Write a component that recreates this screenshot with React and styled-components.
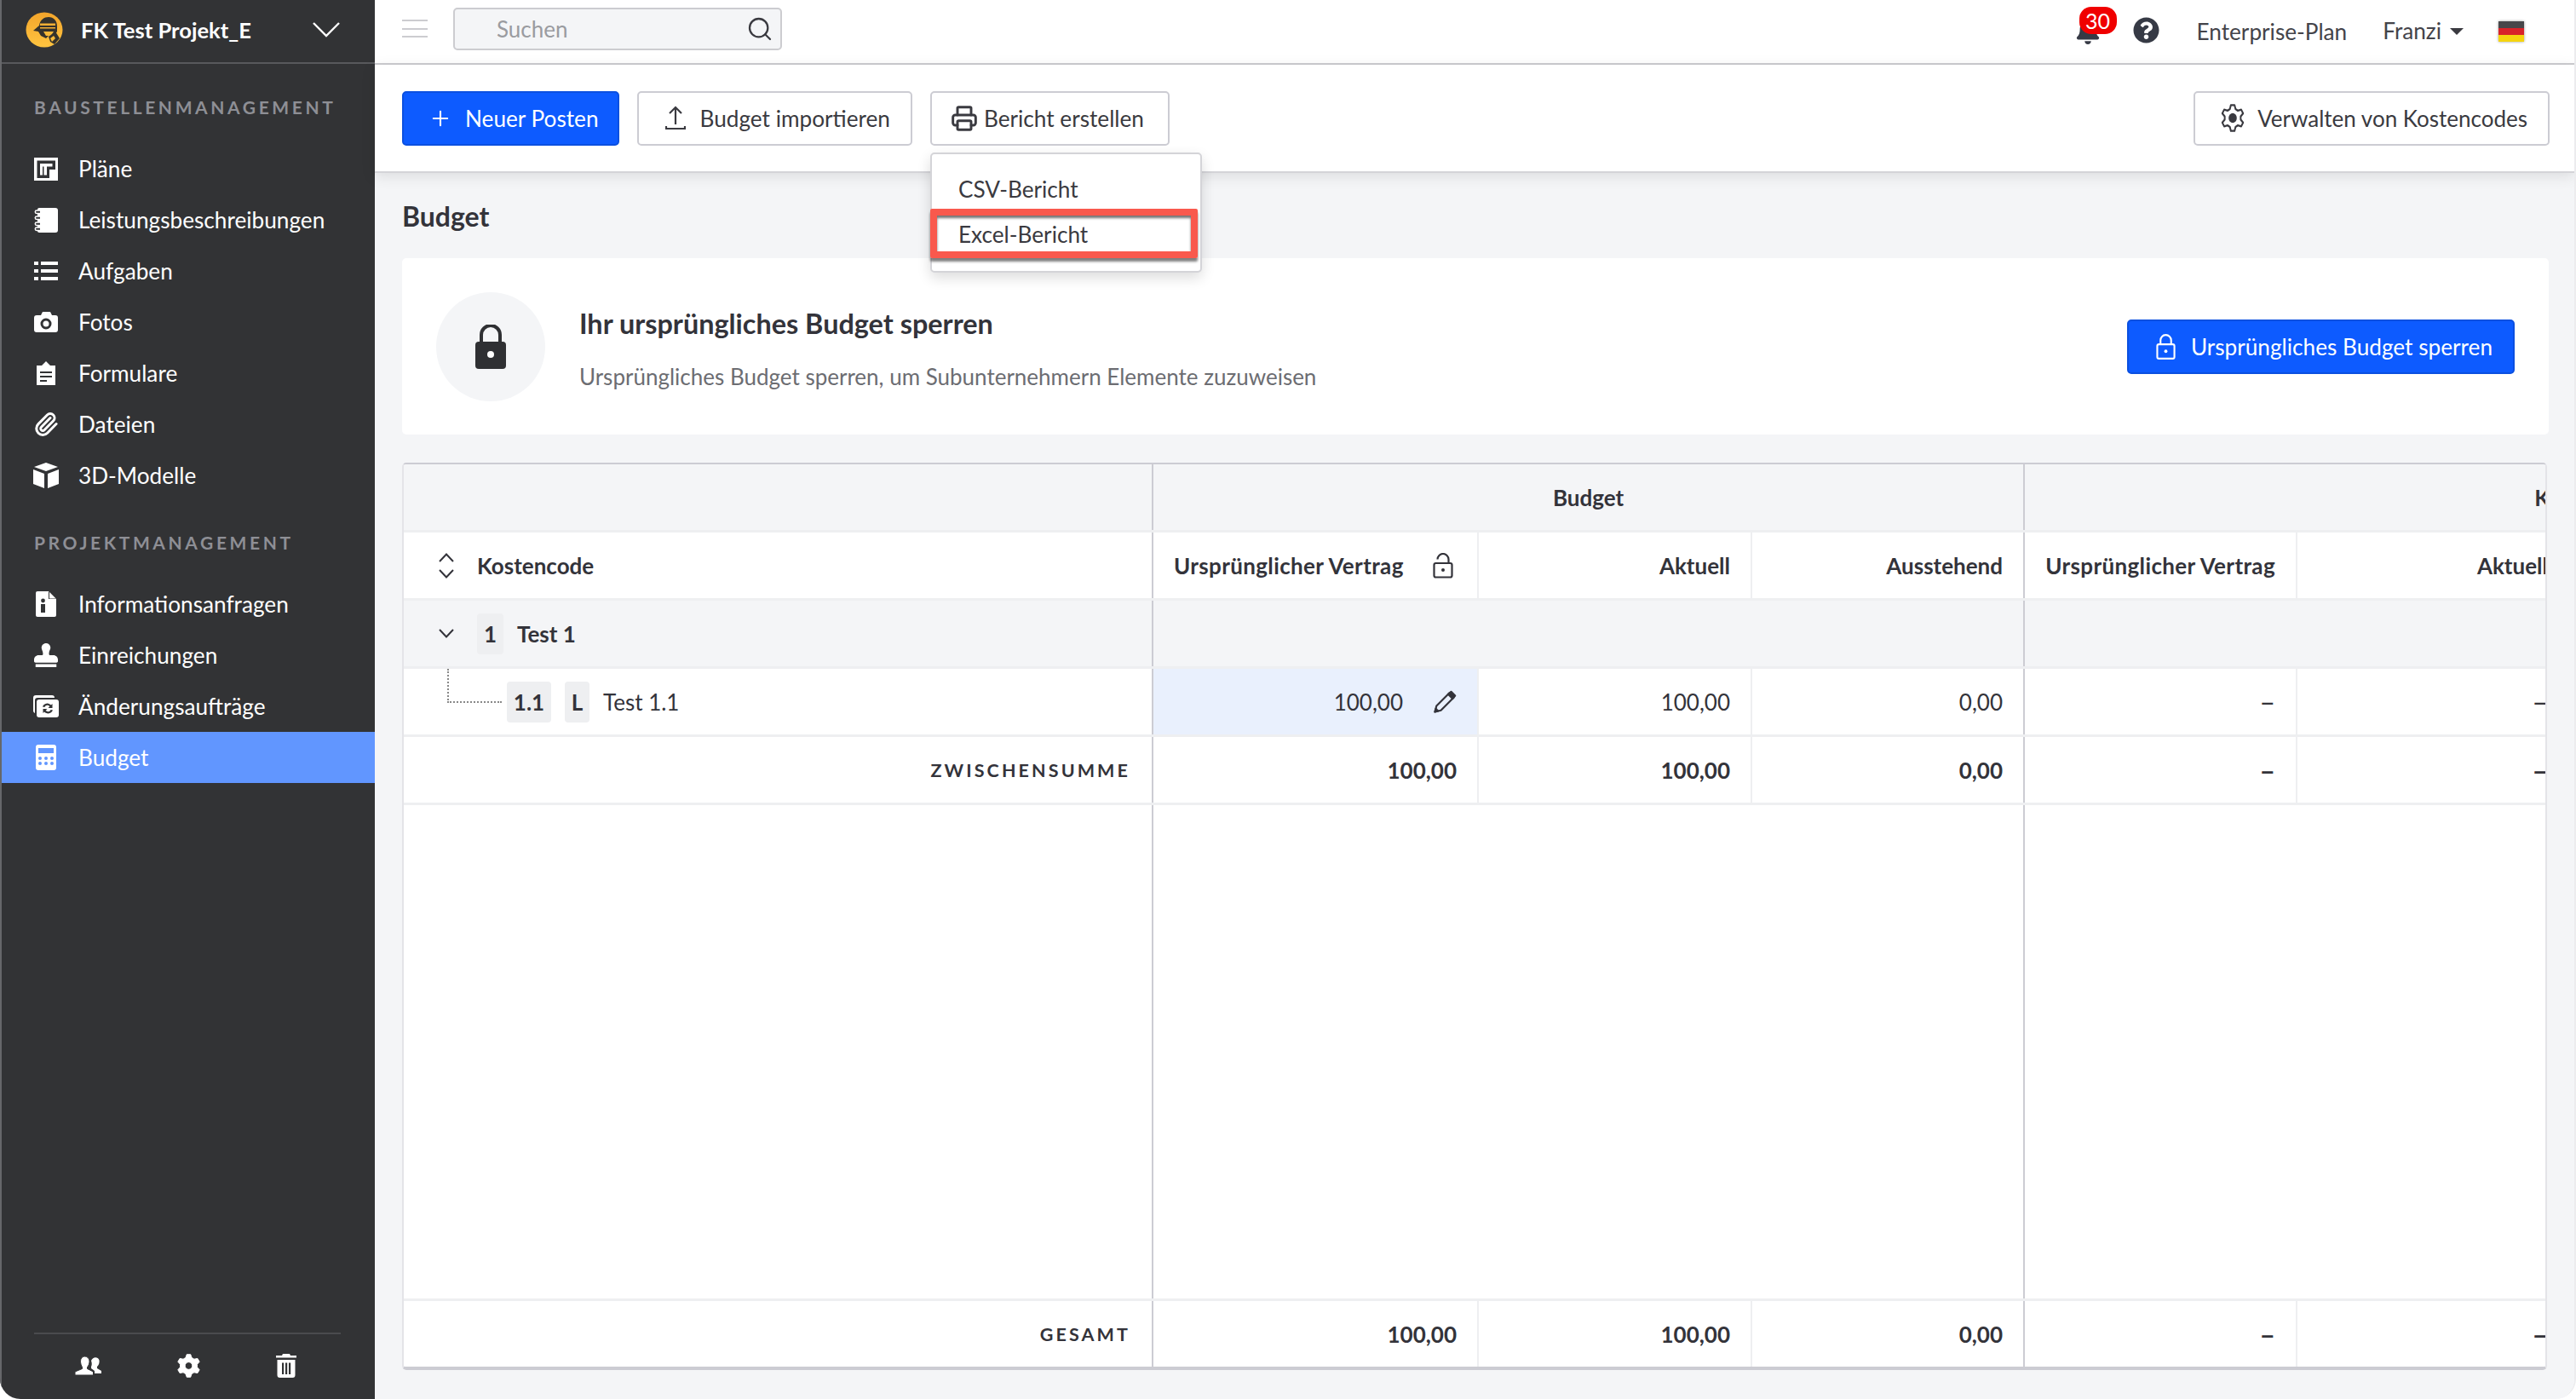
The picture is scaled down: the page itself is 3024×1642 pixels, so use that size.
import React from "react";
import styled, { createGlobalStyle } from "styled-components";
import { Search, Printer, Plus, Paperclip } from "lucide-react";
import { FaStamp, FaBell, FaQuestionCircle } from "react-icons/fa";

const GlobalStyle = createGlobalStyle`
  html, body { margin: 0; padding: 0; background: #fff; }
  body { font-family: "Lato", "Liberation Sans", sans-serif; color: #33333a; }
  * { box-sizing: border-box; }
`;

const Frame = styled.div`
  display: flex;
  width: 3024px;
  height: 1642px;
  overflow: hidden;
  border-right: 2px solid #ececee;
  border-radius: 0 0 24px 24px;
`;

const Sidebar = styled.aside`
  display: flex;
  flex-direction: column;
  flex: 0 0 440px;
  background: #323335;
  border-left: 2px solid #66676a;
  color: #fff;
`;

const ProjectBar = styled.div`
  display: flex;
  align-items: center;
  height: 75px;
  flex-shrink: 0;
  padding: 0 41px 3px 28px;
  border-bottom: 2px solid #58595c;
`;

const ProjectName = styled.span`
  flex: 1;
  margin-left: 21px;
  font-size: 25.600px;
  font-weight: 700;
  white-space: nowrap;
`;

const SectionLabel = styled.div`
  margin: ${(p) => p.$top}px 0 29px 38px;
  font-size: 21px;
  line-height: 26px;
  font-weight: 700;
  letter-spacing: 3.600px;
  color: #8e8f95;
`;

const NavRow = styled.a`
  display: flex;
  align-items: center;
  height: 60px;
  padding-left: 36px;
  font-size: 26.200px;
  color: #fff;
  background: ${(p) => (p.$active ? "#6196ff" : "transparent")};
`;

const NavIcon = styled.span`
  display: flex;
  align-items: center;
  justify-content: center;
  width: 32px;
  height: 32px;
  margin-right: 22px;
`;

const SidebarFoot = styled.div`
  display: flex;
  justify-content: space-between;
  align-items: center;
  margin: auto 40px 0 38px;
  height: 78px;
  padding: 0 52px 3px 48px;
  border-top: 2px solid #4a4b4e;
`;

const Main = styled.main`
  display: flex;
  flex-direction: column;
  flex: 1;
  min-width: 0;
  background: #f4f5f7;
`;

const TopBar = styled.header`
  display: flex;
  align-items: center;
  height: 76px;
  flex-shrink: 0;
  padding: 0 59px 0 32px;
  background: #fff;
  border-bottom: 2px solid #ccccd0;
`;

const Burger = styled.span`
  display: flex;
  flex-direction: column;
  justify-content: space-between;
  width: 30px;
  height: 21px;
  margin: 0 30px 7px 0;
  i { display: block; height: 2px; background: #ccccd0; }
`;

const SearchBox = styled.div`
  display: flex;
  align-items: center;
  justify-content: space-between;
  width: 386px;
  height: 50px;
  margin-bottom: 7px;
  padding: 0 8px 0 49px;
  background: #f4f5f7;
  border: 2px solid #ccccd0;
  border-radius: 5px;
  font-size: 26px;
  color: #9a9ba0;
`;

const TopRight = styled.div`
  display: flex;
  align-items: center;
  margin-left: auto;
`;

const BellWrap = styled.span`
  position: relative;
  display: flex;
  width: 30px;
  height: 34px;
  margin: 4px 0 0 0;
  color: #363a45;
`;

const Badge = styled.span`
  position: absolute;
  left: 5px;
  top: -14px;
  width: 44px;
  height: 32px;
  border-radius: 14px;
  background: #f00000;
  color: #fff;
  font-size: 25px;
  line-height: 32px;
  text-align: center;
`;

const HelpIcon = styled(FaQuestionCircle)`
  margin: 0 0 3px 38px;
  color: #363a45;
`;

const TopText = styled.span`
  margin: 0 0 ${(p) => p.$lift || 0}px ${(p) => p.$left}px;
  font-size: 26.200px;
  color: #44444a;
  white-space: nowrap;
`;

const Caret = styled.span`
  width: 0;
  height: 0;
  margin-left: 10px;
  border-left: 8px solid transparent;
  border-right: 8px solid transparent;
  border-top: 8px solid #3a3a40;
`;

const Flag = styled.span`
  display: flex;
  flex-direction: column;
  width: 30px;
  height: 24px;
  margin-left: 41px;
  box-shadow: 0 0 3px rgba(0, 0, 0, 0.4);
  i { flex: 1; }
  i:nth-child(1) { background: #47474a; }
  i:nth-child(2) { background: #d8232a; }
  i:nth-child(3) { background: #f5d40f; }
`;

const Toolbar = styled.div`
  position: relative;
  z-index: 2;
  display: flex;
  align-items: center;
  gap: 21px;
  height: 127px;
  flex-shrink: 0;
  padding: 0 29px 0 32px;
  background: #fff;
  border-bottom: 2px solid #d4d4d8;
  box-shadow: 0 4px 16px rgba(0, 0, 0, 0.1);
`;

const Button = styled.button`
  display: flex;
  align-items: center;
  height: 64px;
  padding: 0 ${(p) => p.$padR || 24}px 0 ${(p) => p.$padL}px;
  gap: ${(p) => p.$gap}px;
  font-family: inherit;
  font-size: ${(p) => p.$size || 26.2}px;
  white-space: nowrap;
  border-radius: 5px;
  border: 2px solid ${(p) => (p.$primary ? "#0b50e0" : "#ccccd3")};
  background: ${(p) => (p.$primary ? "#0d5bff" : "#fff")};
  color: ${(p) => (p.$primary ? "#fff" : "#3a3a40")};
  margin-left: ${(p) => (p.$push ? "auto" : "0")};
`;

const MenuAnchor = styled.div`
  position: relative;
`;

const Menu = styled.div`
  position: absolute;
  left: 0;
  top: 72px;
  width: 319px;
  height: 141px;
  padding-top: 19px;
  background: #fff;
  border: 2px solid #d4d4d8;
  border-radius: 5px;
  box-shadow: 0 6px 16px rgba(0, 0, 0, 0.14);
`;

const MenuItem = styled.div`
  height: 44px;
  padding-left: 31px;
  font-size: 26.200px;
  line-height: 44px;
  color: #3a3a40;
`;

const MarkedItem = styled(MenuItem)`
  position: absolute;
  left: -2px;
  top: 64px;
  width: 314px;
  height: 58px;
  padding-left: 25px;
  line-height: 45px;
  border: 8px solid #f9594d;
  border-radius: 2px;
  box-shadow: inset 0 3px 3px rgba(0, 0, 0, 0.55), 0 4px 3px rgba(0, 0, 0, 0.5);
`;

const Content = styled.div`
  display: flex;
  flex-direction: column;
  flex: 1;
  min-height: 0;
  padding: 0 30px 34px 32px;
`;

const PageTitle = styled.h1`
  margin: 32px 0 30px;
  font-size: 32px;
  line-height: 38px;
  font-weight: 700;
  color: #33333a;
`;

const LockCard = styled.section`
  display: flex;
  align-items: center;
  height: 207px;
  flex-shrink: 0;
  padding: 0 40px;
  background: #fff;
  border-radius: 5px;
`;

const LockCircle = styled.div`
  display: flex;
  align-items: center;
  justify-content: center;
  width: 128px;
  height: 128px;
  border-radius: 50%;
  background: #f4f5f7;
  margin-right: 40px;
`;

const LockText = styled.div`
  flex: 1;
  padding-top: 8px;
`;

const LockTitle = styled.h2`
  margin: 0 0 24px;
  font-size: 32.400px;
  line-height: 38px;
  font-weight: 700;
  color: #33333a;
`;

const LockSub = styled.p`
  margin: 0;
  font-size: 26px;
  line-height: 38px;
  color: #6c6d72;
`;

const TableBox = styled.div`
  display: flex;
  flex-direction: column;
  flex: 1;
  min-height: 0;
  margin-top: 33px;
  width: 2518px;
  overflow: hidden;
  background: #fff;
  border: 2px solid #e4e4e8;
  border-top-color: #ccccd3;
  border-bottom: 4px solid #ccccd3;
  border-radius: 5px;
`;

const Row = styled.div`
  display: grid;
  grid-template-columns: 880px 382px 321px 320px 320px 320px 320px 320px;
  flex: ${(p) => (p.$grow ? 1 : `0 0 ${p.$height || 80}px`)};
  background: ${(p) => (p.$grey ? "#f4f5f7" : "#fff")};
  border-bottom: ${(p) => (p.$last ? "0" : "3px solid #eeeff1")};
`;

const Cell = styled.div`
  display: flex;
  align-items: center;
  justify-content: ${(p) => p.$justify || "flex-end"};
  grid-column: ${(p) => (p.$span ? `span ${p.$span}` : "auto")};
  gap: ${(p) => p.$gap || 0}px;
  padding: 0 24px;
  min-width: 0;
  font-size: 26px;
  font-weight: ${(p) => (p.$strong ? 700 : 400)};
  letter-spacing: ${(p) => (p.$wide ? "0.360px" : "0")};
  white-space: nowrap;
  color: #33333a;
  background: ${(p) => (p.$tint ? "#e9f0fd" : "transparent")};
  border-right: ${(p) => (p.$group ? "2px solid #ccccd3" : p.$plain ? "0" : "2px solid #eeeff1")};
`;

const CodeCell = styled(Cell)`
  justify-content: ${(p) => p.$justify || "flex-start"};
  padding: 0 ${(p) => (p.$right ? 25 : 0)}px 0 ${(p) => p.$indent || 41}px;
`;

const TreeCell = styled(CodeCell)`
  position: relative;
`;

const Caption = styled.span`
  font-size: 21.500px;
  font-weight: 700;
  letter-spacing: 3.100px;
`;

const Dash = styled.span`
  font-size: 32px;
  line-height: 26px;
`;

const CodeTag = styled.span`
  display: inline-flex;
  align-items: center;
  justify-content: center;
  height: 48px;
  min-width: ${(p) => p.$w}px;
  margin-left: ${(p) => p.$left || 0}px;
  border-radius: 4px;
  background: #eeeff1;
  font-weight: ${(p) => (p.$strong ? 700 : 400)};
  font-size: 26px;
`;

const CodeName = styled.span`
  margin-left: 16px;
  font-weight: ${(p) => (p.$strong ? 700 : 400)};
`;

const TreeLine = styled.span`
  position: absolute;
  left: 51px;
  top: 0;
  width: 64px;
  height: 40px;
  border-left: 2px dotted #888;
  border-bottom: 2px dotted #888;
`;

const LockMark = styled.span`
  display: flex;
  margin-right: 4px;
`;

function gearPath(teeth, outer, inner, cx, cy) {
  const step = (Math.PI * 2) / teeth;
  const points = [];
  for (let i = 0; i < teeth; i++) {
    const a = -Math.PI / 2 + i * step;
    const spots = [
      [a - step * 0.34, inner],
      [a - step * 0.16, outer],
      [a + step * 0.16, outer],
      [a + step * 0.34, inner],
    ];
    spots.forEach(([angle, r]) => {
      points.push(`${(cx + Math.cos(angle) * r).toFixed(2)} ${(cy + Math.sin(angle) * r).toFixed(2)}`);
    });
  }
  return `M${points.join("L")}Z`;
}

const Logo = () => (
  <svg width="44" height="42" viewBox="0 0 44 42">
    <defs>
      <linearGradient id="lg" x1="0" y1="0" x2="0" y2="1">
        <stop offset="0" stopColor="#f3a52b" />
        <stop offset="1" stopColor="#ffc440" />
      </linearGradient>
    </defs>
    <ellipse cx="22" cy="21" rx="21.500" ry="20.500" fill="url(#lg)" />
    <path d="M9 22l7-6c1-7 6-10 11-10 6 0 10 4 10 11v6l-4 6-6-1-3 3-6-3-3-5z" fill="#35322c" />
    <path d="M17 13.500h18v2.500H17zM17 18h18v1.500H17z" fill="#f6b035" />
    <path d="M21 23h12l-3 5-6 0z" fill="#f8b837" />
    <path d="M27 29l8-6 5 8-6 7-5-3z" fill="#35322c" />
    <path d="M29 31l4-3 2 3-4 4z" fill="#f9bb38" />
  </svg>
);

const Chevron = () => (
  <svg width="32" height="20" viewBox="0 0 32 20" fill="none" stroke="#fff" strokeWidth="2.400">
    <path d="M1 2l15 15L31 2" />
  </svg>
);

const PlanIcon = () => (
  <svg width="28" height="27" viewBox="0 0 28 27">
    <rect width="28" height="27" fill="#fff" />
    <path d="M3.500 3.500H25V14h-7v10H3.500z" fill="#323335" />
    <path d="M7 7h14.500v3.500H15V20.500h-3.500V10.500H10V20.500H7z" fill="#fff" />
  </svg>
);

const BookIcon = () => (
  <svg width="28" height="29" viewBox="0 0 28 29">
    <path d="M4 2a2 2 0 0 1 2-2h19a3 3 0 0 1 3 3v23a3 3 0 0 1-3 3H6a2 2 0 0 1-2-2z" fill="#fff" />
    {[3, 10, 17, 23].map((y) => (
      <path
        key={y}
        d="M7 0H3a1.700 1.700 0 0 0 0 3.400h4"
        transform={`translate(0 ${y})`}
        fill="#323335"
        stroke="#fff"
        strokeWidth="1.500"
      />
    ))}
  </svg>
);

const ListIcon = () => (
  <svg width="28" height="22" viewBox="0 0 28 22" fill="#fff">
    <path d="M0 0h5v4H0zM8 0h20v4H8zM0 9h5v4H0zM8 9h20v4H8zM0 18h5v4H0zM8 18h20v4H8z" />
  </svg>
);

const CameraIcon = () => (
  <svg width="28" height="24" viewBox="0 0 28 24" fill="#fff">
    <path
      fillRule="evenodd"
      d="M3 4h5l2-4h9l2 4h4a3 3 0 0 1 3 3v14a3 3 0 0 1-3 3H3a3 3 0 0 1-3-3V7a3 3 0 0 1 3-3zm11 3.500a6.500 6.500 0 1 0 0 13 6.500 6.500 0 0 0 0-13zm0 3a3.500 3.500 0 1 1 0 7 3.500 3.500 0 0 1 0-7z"
    />
  </svg>
);

const ClipboardIcon = () => (
  <svg width="22" height="28" viewBox="0 0 22 28" fill="#fff">
    <path fillRule="evenodd" d="M0 5h6l5-5 5 5h6v23H0zm4 7v2h14v-2zm0 5v2h14v-2zm0 5v2h8v-2z" />
  </svg>
);

const CubeIcon = () => (
  <svg width="30" height="30" viewBox="0 0 30 30" fill="#fff">
    <path d="M15 0l14 5-14 5L1 5zM0 8l13 5v17L0 25zM30 8l-13 5v17l13-5z" />
  </svg>
);

const InfoIcon = () => (
  <svg width="24" height="30" viewBox="0 0 24 30">
    <path d="M2 0h13l9 9v19a2 2 0 0 1-2 2H2a2 2 0 0 1-2-2V2a2 2 0 0 1 2-2z" fill="#fff" />
    <path d="M15 0v9h9z" fill="#323335" />
    <path d="M16 1l7.500 7.500H16z" fill="#fff" />
    <circle cx="8.500" cy="11" r="2.400" fill="#323335" />
    <path d="M6 15h5v10H6z" fill="#323335" />
  </svg>
);

const ChangeIcon = () => (
  <svg width="30" height="26" viewBox="0 0 30 26">
    <path d="M3 0h19a3 3 0 0 1 3 3H5a3 3 0 0 0-3 3v15a3 3 0 0 1-2-3V3a3 3 0 0 1 3-3z" fill="#fff" />
    <rect x="4" y="5" width="26" height="21" rx="3" fill="#fff" />
    <path
      d="M11 13.500a6 6 0 0 1 10-2l1.500-1.500v5h-5l1.800-1.800a3.500 3.500 0 0 0-6 .8zM23 17.500a6 6 0 0 1-10 2L11.500 21v-5h5l-1.800 1.800a3.500 3.500 0 0 0 6-.8z"
      fill="#323335"
    />
  </svg>
);

const CalcIcon = () => (
  <svg width="24" height="30" viewBox="0 0 24 30">
    <rect width="24" height="30" rx="3" fill="#fff" />
    <path d="M3 4h18v6H3z" fill="#6196ff" />
    {[5, 12, 19].map((x) =>
      [16, 22].map((y) => <circle key={`${x}${y}`} cx={x} cy={y} r="2" fill="#6196ff" />)
    )}
  </svg>
);

const PeopleIcon = () => (
  <svg width="31" height="22" viewBox="0 0 31 22" fill="#fff">
    <path d="M19 5c2-5 8-5 9.500-.5.500 2.500-.500 6-2.500 7.500v2l5 3v3h-8v-3l-4-3v-2c1-2 1-4 0-7z" />
    <path d="M6.500 5.500C6.500 2 9 0 11.500 0S17 2 17 5.500c0 3-1 5.500-2.500 7v2l7 3.500v4H0v-4l8.500-3.500v-2C7.500 11 6.500 8.500 6.500 5.500z" stroke="#323335" strokeWidth="1" />
  </svg>
);

const SolidGear = () => (
  <svg width="27" height="28" viewBox="0 0 28 28">
    <path
      fillRule="evenodd"
      d={`${gearPath(6, 14, 10.5, 14, 14)}M14 9.500a4.500 4.500 0 1 0 0 9 4.500 4.500 0 0 0 0-9z`}
      fill="#fff"
      stroke="#fff"
      strokeWidth="1"
      strokeLinejoin="round"
    />
  </svg>
);

const TrashIcon = () => (
  <svg width="24" height="28" viewBox="0 0 24 28" fill="#fff">
    <path d="M8 0h8l1 2h7v2.500H0V2h7zM1.500 7h21v18a3 3 0 0 1-3 3h-15a3 3 0 0 1-3-3z" />
    <path d="M7 10.500h2.200V24H7zM11 10.500h2.200V24H11zM15 10.500h2.200V24H15z" fill="#323335" />
  </svg>
);

const UploadIcon = () => (
  <svg width="24" height="30" viewBox="0 0 24 30" fill="none" stroke="#3a3a40" strokeWidth="2.200">
    <path d="M12 22V2M5 9l7-7 7 7M1 24v3h22v-3" />
  </svg>
);

const GearOutline = () => (
  <svg width="28" height="33" viewBox="0 0 28 28" preserveAspectRatio="none">
    <path
      d={gearPath(6, 13, 9.5, 14, 14)}
      fill="none"
      stroke="#3a3a40"
      strokeWidth="2"
      strokeLinejoin="round"
    />
    <circle cx="14" cy="14" r="4.800" fill="#3a3a40" />
  </svg>
);

const LockOutline = () => (
  <svg width="23" height="32" viewBox="0 0 24 32" fill="none" stroke="#fff" strokeWidth="2.200">
    <rect x="1.500" y="13" width="21" height="17.500" rx="2" />
    <path d="M5.500 13V8a6.500 6.500 0 0 1 13 0v5" />
    <circle cx="12" cy="21.500" r="2" fill="#fff" stroke="none" />
  </svg>
);

const OpenLock = () => (
  <svg width="24" height="30" viewBox="0 0 24 30" fill="none" stroke="#33333a" strokeWidth="2.200">
    <rect x="1.500" y="12" width="21" height="16.500" rx="2" />
    <path d="M5.500 7.500a6.500 6.500 0 0 1 13 0V12" />
    <circle cx="12" cy="20" r="2" fill="#33333a" stroke="none" />
  </svg>
);

const LockSolid = () => (
  <svg width="36" height="52" viewBox="0 0 36 52">
    <path d="M7 22V12a11 11 0 0 1 22 0v10" fill="none" stroke="#2f3033" strokeWidth="4" />
    <rect y="20" width="36" height="32" rx="4" fill="#2f3033" />
    <circle cx="18" cy="35" r="4" fill="#fff" />
  </svg>
);

const PencilIcon = () => (
  <svg width="28" height="28" viewBox="0 0 28 28" fill="none" stroke="#33333a" strokeWidth="2.200" strokeLinejoin="round">
    <path d="M2.500 25.500l1.800-7L19.500 3.300l5.200 5.200L9.500 23.700z" />
    <path d="M18 4.800l5.200 5.200 3-3.500-4.700-4.700z" fill="#33333a" />
    <path d="M2.500 25.500l1-3.700 2.700 2.700z" fill="#33333a" />
  </svg>
);

const SortIcon = () => (
  <svg width="18" height="30" viewBox="0 0 18 30" fill="none" stroke="#33333a" strokeWidth="2">
    <path d="M1 10l8-8.500 8 8.500M1 20l8 8.500 8-8.500" />
  </svg>
);

const FoldIcon = () => (
  <svg width="18" height="11" viewBox="0 0 18 11" fill="none" stroke="#33333a" strokeWidth="2">
    <path d="M1 1l8 8.500L17 1" />
  </svg>
);

const projectItems = [
  ["Pläne", <PlanIcon />],
  ["Leistungsbeschreibungen", <BookIcon />],
  ["Aufgaben", <ListIcon />],
  ["Fotos", <CameraIcon />],
  ["Formulare", <ClipboardIcon />],
  ["Dateien", <Paperclip size={30} strokeWidth={2.4} color="#fff" />],
  ["3D-Modelle", <CubeIcon />],
];

const managementItems = [
  ["Informationsanfragen", <InfoIcon />],
  ["Einreichungen", <FaStamp size={28} color="#fff" />],
  ["Änderungsaufträge", <ChangeIcon />],
  ["Budget", <CalcIcon />, true],
];

function NavList({ items }) {
  return items.map(([label, icon, active]) => (
    <NavRow key={label} $active={active}>
      <NavIcon>{icon}</NavIcon>
      {label}
    </NavRow>
  ));
}

function ValueCells({ budget, strong, tint, pencil }) {
  return (
    <>
      <Cell $strong={strong} $tint={tint} $gap={35}>
        {budget[0]}
        {pencil && <PencilIcon />}
      </Cell>
      <Cell $strong={strong}>{budget[1]}</Cell>
      <Cell $strong={strong} $group>{budget[2]}</Cell>
      <Cell $strong={strong}><Dash>–</Dash></Cell>
      <Cell $strong={strong}><Dash>–</Dash></Cell>
    </>
  );
}

export default function App() {
  return (
    <Frame>
      <GlobalStyle />
      <Sidebar>
        <ProjectBar>
          <Logo />
          <ProjectName>FK Test Projekt_E</ProjectName>
          <Chevron />
        </ProjectBar>
        <SectionLabel $top={38}>BAUSTELLENMANAGEMENT</SectionLabel>
        <NavList items={projectItems} />
        <SectionLabel $top={36}>PROJEKTMANAGEMENT</SectionLabel>
        <NavList items={managementItems} />
        <SidebarFoot>
          <PeopleIcon />
          <SolidGear />
          <TrashIcon />
        </SidebarFoot>
      </Sidebar>
      <Main>
        <TopBar>
          <Burger><i /><i /><i /></Burger>
          <SearchBox>
            Suchen
            <Search size={32} strokeWidth={1.7} color="#3a3a40" />
          </SearchBox>
          <TopRight>
            <BellWrap>
              <FaBell size={30} />
              <Badge>30</Badge>
            </BellWrap>
            <HelpIcon size={31} />
            <TopText $left={44}>Enterprise-Plan</TopText>
            <TopText $left={42} $lift={3}>Franzi</TopText>
            <Caret />
            <Flag><i /><i /><i /></Flag>
          </TopRight>
        </TopBar>
        <Toolbar>
          <Button $primary $padL={29} $padR={22} $gap={15}>
            <Plus size={28} strokeWidth={1.8} />
            Neuer Posten
          </Button>
          <Button $padL={31} $gap={17}>
            <UploadIcon />
            Budget importieren
          </Button>
          <MenuAnchor>
            <Button $padL={22} $padR={28} $gap={7}>
              <Printer size={32} strokeWidth={2.2} />
              Bericht erstellen
            </Button>
            <Menu>
              <MenuItem>CSV-Bericht</MenuItem>
              <MarkedItem>Excel-Bericht</MarkedItem>
            </Menu>
          </MenuAnchor>
          <Button $push $padL={30} $gap={15} $size={26}>
            <GearOutline />
            Verwalten von Kostencodes
          </Button>
        </Toolbar>
        <Content>
          <PageTitle>Budget</PageTitle>
          <LockCard>
            <LockCircle><LockSolid /></LockCircle>
            <LockText>
              <LockTitle>Ihr ursprüngliches Budget sperren</LockTitle>
              <LockSub>Ursprüngliches Budget sperren, um Subunternehmern Elemente zuzuweisen</LockSub>
            </LockText>
            <Button $primary $padL={32} $gap={18}>
              <LockOutline />
              Ursprüngliches Budget sperren
            </Button>
          </LockCard>
          <TableBox>
            <Row $grey>
              <Cell $group />
              <Cell $span={3} $group $justify="center" $strong>Budget</Cell>
              <Cell $span={4} $plain $justify="center" $strong $wide>Kosten</Cell>
            </Row>
            <Row>
              <CodeCell $group $gap={27} $strong>
                <SortIcon />
                Kostencode
              </CodeCell>
              <Cell $strong $wide $justify="space-between">
                Ursprünglicher Vertrag
                <LockMark><OpenLock /></LockMark>
              </Cell>
              <Cell $strong>Aktuell</Cell>
              <Cell $strong $group>Ausstehend</Cell>
              <Cell $strong $wide>Ursprünglicher Vertrag</Cell>
              <Cell $strong>Aktuell</Cell>
            </Row>
            <Row $grey>
              <CodeCell $group>
                <FoldIcon />
                <CodeTag $w={31} $strong $left={27}>1</CodeTag>
                <CodeName $strong>Test 1</CodeName>
              </CodeCell>
              <Cell $span={3} $group />
            </Row>
            <Row>
              <TreeCell $group $indent={121}>
                <TreeLine />
                <CodeTag $w={52} $strong>1.1</CodeTag>
                <CodeTag $w={29} $strong $left={16}>L</CodeTag>
                <CodeName>Test 1.1</CodeName>
              </TreeCell>
              <ValueCells budget={["100,00", "100,00", "0,00"]} tint pencil />
            </Row>
            <Row>
              <CodeCell $group $right $justify="flex-end"><Caption>ZWISCHENSUMME</Caption></CodeCell>
              <ValueCells budget={["100,00", "100,00", "0,00"]} strong />
            </Row>
            <Row $grow>
              <Cell $group />
              <Cell $span={3} $group />
            </Row>
            <Row $last $height={77}>
              <CodeCell $group $right $justify="flex-end"><Caption>GESAMT</Caption></CodeCell>
              <ValueCells budget={["100,00", "100,00", "0,00"]} strong />
            </Row>
          </TableBox>
        </Content>
      </Main>
    </Frame>
  );
}
